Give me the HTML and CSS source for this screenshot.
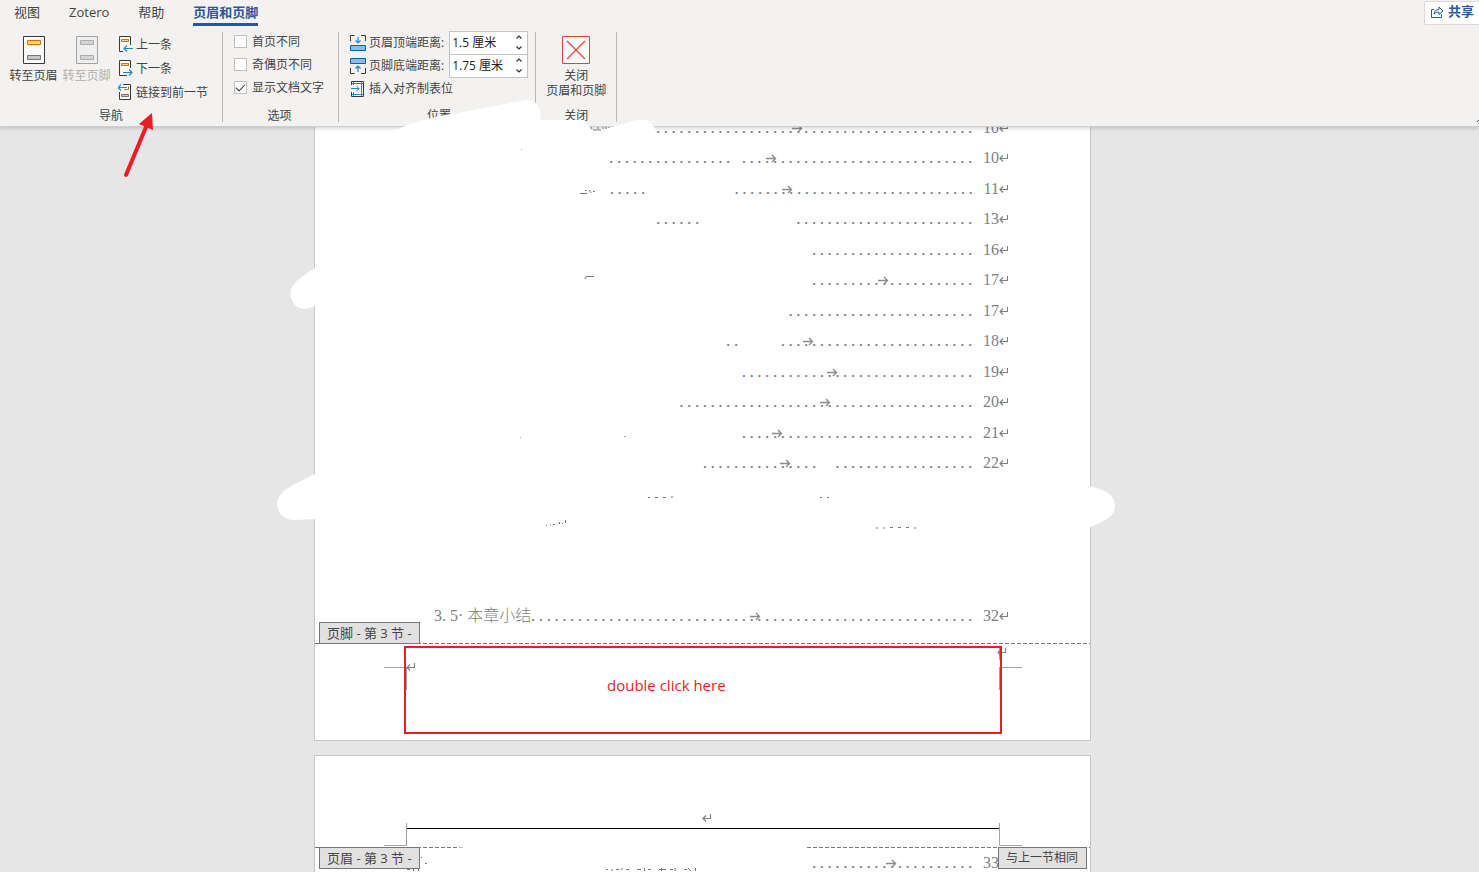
FILE: index.html
```html
<!DOCTYPE html>
<html lang="zh-CN">
<head>
<meta charset="utf-8">
<title>页眉和页脚</title>
<link rel="stylesheet" href="styles.css">
</head>
<body>
<svg class="defs" aria-hidden="true">
  <symbol id="return" viewBox="0 0 9 8"><path d="M8.5 0v4.500H1M4 1.500l-3 3 3 3" fill="none" stroke="#808080" stroke-width="1.200"/></symbol>
  <symbol id="tab" viewBox="0 0 11 9"><path d="M0 4.500h9.500M6 1l3.500 3.500L6 8" fill="none" stroke="#8c8c8c" stroke-width="1.400"/></symbol>
</svg>
<div class="app">
  <header class="ribbon">
    <nav class="tabs">
      <button class="tab">视图</button>
      <button class="tab">Zotero</button>
      <button class="tab">帮助</button>
      <button class="tab tab-active">页眉和页脚</button>
      <button class="share">
        <svg width="13" height="13" viewBox="0 0 13 13" fill="none" stroke="#2b579a"><path d="M3 4.500H.5v8h10V9M3 9c.3-3 2-4.500 5-4.500V2l4 4-4 3.500V7C6 7 4.500 7.500 3 9z"/></svg>
        <span>共享</span>
      </button>
    </nav>
    <div class="groups">
      <section class="group group-nav">
        <div class="group-body">
          <button class="big">
            <svg width="22" height="28" viewBox="0 0 22 28"><path d="M.5.5h21v27H.5z" fill="#fafafa" stroke="#3b3a39"/><path d="M4.500 4.500h13v4h-13z" fill="#fdd68a" stroke="#d86f00"/><path d="M4.500 19.500h13v4h-13z" fill="#c8c6c4" stroke="#797775"/></svg>
            <span>转至页眉</span>
          </button>
          <button class="big" disabled>
            <svg width="22" height="28" viewBox="0 0 22 28"><path d="M.5.5h21v27H.5z" fill="#efefef" stroke="#a3a3a3"/><path d="M4.500 4.500h13v4h-13zM4.500 19.500h13v4h-13z" fill="#d4d4d4" stroke="#acacac"/></svg>
            <span>转至页脚</span>
          </button>
          <div class="stack stack-nav">
            <button class="small">
              <svg width="16" height="16" viewBox="0 0 16 16" fill="none"><path d="M5 15.500H1.500V.5h11V9" fill="#fafafa" stroke="#3b3a39"/><path d="M3.500 3.500h7v2h-7z" fill="#fdd68a" stroke="#d86f00"/><path d="M15 12.500H6M9 9.500l-3 3 3 3" stroke="#1e8bcd" stroke-width="1.2"/></svg>
              <span>上一条</span>
            </button>
            <button class="small">
              <svg width="16" height="16" viewBox="0 0 16 16" fill="none"><path d="M9 15.500H1.500V.5h11V8" fill="#fafafa" stroke="#3b3a39"/><path d="M3.500 3.500h7v2h-7z" fill="#fdd68a" stroke="#d86f00"/><path d="M5 12.500h9M11 9.500l3 3-3 3" stroke="#1e8bcd" stroke-width="1.2"/></svg>
              <span>下一条</span>
            </button>
            <button class="small">
              <svg width="16" height="16" viewBox="0 0 16 16" fill="none"><path d="M5 .5h7.500v15h-11V8" fill="#fafafa" stroke="#3b3a39"/><path d="M6 5.500h4.500v-3" stroke="#d86f00"/><path d="M3.500 10.500h7v2h-7z" fill="#c8c6c4" stroke="#797775"/><path d="M9 3.500H0M3 .5l-3 3 3 3" stroke="#1e8bcd" stroke-width="1.2"/></svg>
              <span>链接到前一节</span>
            </button>
          </div>
        </div>
        <h2>导航</h2>
      </section>
      <section class="group group-options">
        <div class="group-body">
          <div class="stack">
            <label class="check"><input type="checkbox"><span>首页不同</span></label>
            <label class="check"><input type="checkbox"><span>奇偶页不同</span></label>
            <label class="check"><input type="checkbox" checked><span>显示文档文字</span></label>
          </div>
        </div>
        <h2>选项</h2>
      </section>
      <section class="group group-position">
        <div class="group-body">
          <div class="stack">
            <div class="field">
              <svg width="16" height="16" viewBox="0 0 16 16" fill="none"><path d="M.5 6V.5h4M11 .5h4.500V6" stroke="#3b3a39"/><path d="M.5 10.500h15v5H.5z" fill="#83beec" stroke="#0063b1"/><path d="M8 2v6M5.500 5.500L8 8l2.500-2.500" stroke="#1e8bcd" stroke-width="1.2"/></svg>
              <label for="top">页眉顶端距离:</label>
              <div class="spin"><input id="top" type="text" value="1.5 厘米"><div class="arrows"><button aria-label="增大"><svg width="6" height="4" viewBox="0 0 6 4"><path d="M.5 3.500L3 1l2.500 2.500" fill="none" stroke="#333" stroke-width="1.200"/></svg></button><button aria-label="减小"><svg width="6" height="4" viewBox="0 0 6 4"><path d="M.5.5L3 3 5.500.5" fill="none" stroke="#333" stroke-width="1.200"/></svg></button></div></div>
            </div>
            <div class="field">
              <svg width="16" height="16" viewBox="0 0 16 16" fill="none"><path d="M.5 10v5.500h4M11 15.500h4.500V10" stroke="#3b3a39"/><path d="M.5.5h15v5H.5z" fill="#83beec" stroke="#0063b1"/><path d="M8 14V8M5.500 10.500L8 8l2.500 2.500" stroke="#1e8bcd" stroke-width="1.2"/></svg>
              <label for="bottom">页脚底端距离:</label>
              <div class="spin"><input id="bottom" type="text" value="1.75 厘米"><div class="arrows"><button aria-label="增大"><svg width="6" height="4" viewBox="0 0 6 4"><path d="M.5 3.500L3 1l2.500 2.500" fill="none" stroke="#333" stroke-width="1.200"/></svg></button><button aria-label="减小"><svg width="6" height="4" viewBox="0 0 6 4"><path d="M.5.5L3 3 5.500.5" fill="none" stroke="#333" stroke-width="1.200"/></svg></button></div></div>
            </div>
            <button class="field">
              <svg width="16" height="16" viewBox="0 0 16 16" fill="none"><path d="M1.500 4V.5h12v15h-12V11" stroke="#3b3a39" fill="#fafafa"/><path d="M3.500 1v3m0 7v4M11.500 1v14M2 2.500h11M2 13.500h11M1 7.500h8M6.500 5L9 7.500 6.500 10" stroke="#1e8bcd"/></svg>
              <span>插入对齐制表位</span>
            </button>
          </div>
        </div>
        <h2>位置</h2>
      </section>
      <section class="group group-close">
        <div class="group-body">
          <button class="big">
            <svg width="28" height="28" viewBox="0 0 28 28"><path d="M.5.5h27v27H.5z" fill="#fafafa" stroke="#e8403c"/><path d="M5 5l18 18M23 5L5 23" stroke="#e8403c" stroke-width="1.200"/></svg>
            <span>关闭<br>页眉和页脚</span>
          </button>
        </div>
        <h2>关闭</h2>
      </section>
    </div>
  </header>

  <main class="workspace">
    <article class="page page-first">
      <ol class="toc">
        <li><span class="dots">.........................................</span><b>10</b><svg class="ret"><use href="#return"/></svg><svg class="mark" style="left:386px"><use href="#tab"/></svg></li>
        <li><span class="dots">................ ..............................</span><b>10</b><svg class="ret"><use href="#return"/></svg><svg class="mark" style="left:360px"><use href="#tab"/></svg></li>
        <li><span class="dots">.....           ...............................</span><b>11</b><svg class="ret"><use href="#return"/></svg><svg class="mark" style="left:376px"><use href="#tab"/></svg></li>
        <li><span class="dots">......            .......................</span><b>13</b><svg class="ret"><use href="#return"/></svg></li>
        <li><span class="dots">.....................</span><b>16</b><svg class="ret"><use href="#return"/></svg></li>
        <li><span class="dots">.....................</span><b>17</b><svg class="ret"><use href="#return"/></svg><svg class="mark" style="left:472px"><use href="#tab"/></svg></li>
        <li><span class="dots">........................</span><b>17</b><svg class="ret"><use href="#return"/></svg></li>
        <li><span class="dots">..     .........................</span><b>18</b><svg class="ret"><use href="#return"/></svg><svg class="mark" style="left:397px"><use href="#tab"/></svg></li>
        <li><span class="dots">..............................</span><b>19</b><svg class="ret"><use href="#return"/></svg><svg class="mark" style="left:421px"><use href="#tab"/></svg></li>
        <li><span class="dots">......................................</span><b>20</b><svg class="ret"><use href="#return"/></svg><svg class="mark" style="left:414px"><use href="#tab"/></svg></li>
        <li><span class="dots">..............................</span><b>21</b><svg class="ret"><use href="#return"/></svg><svg class="mark" style="left:366px"><use href="#tab"/></svg></li>
        <li><span class="dots">...............  ..................</span><b>22</b><svg class="ret"><use href="#return"/></svg><svg class="mark" style="left:374px"><use href="#tab"/></svg></li>
        <li></li>
        <li></li>
        <li></li>
        <li></li>
        <li><span class="title"><span>3.</span><span>5·</span><span>本章小结</span></span><span class="dots">.........................................................</span><b>32</b><svg class="ret"><use href="#return"/></svg><svg class="mark" style="left:344px"><use href="#tab"/></svg></li>
      </ol>
      <footer class="page-footer">
        <span class="tag tag-footer">页脚 - 第 3 节 -</span>
        <svg class="crop" width="640" height="46" viewBox="0 0 640 46" fill="none" stroke="#a3a3a3"><path d="M0 23.500h22M22.500 23v23M615.500 2v14M615.500 23v23M618 23.500h20"/></svg>
        <svg class="ret ret-left"><use href="#return"/></svg>
        <svg class="ret ret-right"><use href="#return"/></svg>
        <div class="callout">double click here</div>
      </footer>
    </article>

    <article class="page">
      <div class="page-header">
        <svg class="ret"><use href="#return"/></svg>
      </div>
      <div class="header-edge">
        <svg class="crop" width="640" height="24" viewBox="0 0 640 24" fill="none" stroke="#a3a3a3"><path d="M22.500 0v22.500H0M615.500 0v22.500H638"/></svg>
        <span class="tag tag-header">页眉 - 第 3 节 -</span>
        <span class="tag tag-same">与上一节相同</span>
      </div>
      <ol class="toc">
        <li><span class="dots">.....................</span><b>33</b><svg class="ret"><use href="#return"/></svg><svg class="mark" style="left:480px"><use href="#tab"/></svg></li>
      </ol>
    </article>
  </main>

  <svg class="ink" width="1479" height="872" viewBox="0 0 1479 872" fill="none">
    <g fill="#fff">
      <path d="M392 132C412 122 430 117 453 114L510 103C520 101 524 100 528 100C538 101 542 109 540 120H582C588 120 588 125 591 131L604 129L638 120C648 118 655 124 656 134L640 142H440z"/>
      <path d="M317 267C306 273 300 278 295 283C288 290 290 299 295 305C301 311 310 309 317 305z"/>
      <path d="M317 473L295 484C282 491 277 497 277 504C277 514 286 520 294 520L317 519z"/>
      <path d="M1088 485L1102 490C1111 493 1115 499 1115 506C1115 514 1109 518 1102 522L1088 528z"/>
    </g>
    <g stroke="#777">
      <path d="M591 127l1 2M593 130h4M598 127v3h3M603 127v2M606 127v2M609 127v1"/>
      <path d="M580 193.500h7M585 190.500h2M589 190l2 3M593 191.500h2"/>
      <path d="M586 276.500h8M586 277l-1 2"/>
      <path d="M624 436.500h2M520 437.500h1M521 149.500h1" stroke="#aaa"/>
      <path d="M648 497.500h2M655 497.500h3M663 497.500h3M671 497h2M820 497.500h2M827 497.500h2"/>
      <path d="M876 528h2M883 528h2M890 527.500h3M898 527.500h3M906 527.500h3M914 528h2"/>
      <path d="M546 525.500h1M550 525h1M553 524.500h2M559.500 522v2M562 523.500h1M565.500 520v3"/>
      <path d="M421 857.500h1M425 863.500h2M407 869.500h3M413.500 868v3M418.500 868v3"/>
      <path d="M606 869.500h2M611 870h2M616 869.500h3M622 868v2M626 869.500h3M637 869.500h4M644.500 868v3M648 869.500h3M659 869.500h7M661.500 868v3M670 869.500h3M675 868v3M684 869.500h3M688 868l3 3M695.500 868v3"/>
    </g>
    <path d="M1477 122l2-2" stroke="#444"/>
    <path d="M126 175l20-48" stroke="#ed1c24" stroke-width="4" stroke-linecap="round"/>
    <path d="M152 113l1 17-14-6z" fill="#ed1c24"/>
  </svg>
</div>
</body>
</html>
```
FILE: styles.css
```css
* { box-sizing: border-box; }

body {
  margin: 0;
  font-family: "Open Sans", "Noto Sans CJK SC", sans-serif;
  font-size: 12px;
  line-height: 15px;
  color: #444;
}

svg { display: block; flex: none; }

button {
  margin: 0;
  padding: 0;
  border: 0;
  background: none;
  font: inherit;
  color: inherit;
  white-space: nowrap;
}

.defs { position: absolute; width: 0; height: 0; }

.app {
  position: relative;
  display: flex;
  flex-direction: column;
  height: 100vh;
  overflow: hidden;
  background: #e6e6e6;
}

/* Ribbon */
.ribbon {
  position: relative;
  flex: none;
  background: #f3f2f1;
  border-bottom: 1px solid #cfcfcf;
  box-shadow: 0 1px 4px rgba(0, 0, 0, 0.2);
  z-index: 1;
}

.tabs {
  display: flex;
  gap: 29px;
  height: 26px;
  padding-left: 14px;
  font-size: 13px;
}

.tab {
  padding-top: 1px;
  border-bottom: 3px solid transparent;
}

.tab-active {
  color: #2b579a;
  font-weight: 700;
  border-color: #2b579a;
}

.share {
  display: flex;
  align-items: center;
  gap: 4px;
  height: 24px;
  margin: 1px 0 0 auto;
  padding: 0 5px 3px 6px;
  border: 1px solid #dddbd9;
  border-right: 0;
  border-radius: 2px 0 0 2px;
  background: #fff;
  color: #2b579a;
  font-weight: 700;
}

.groups {
  display: flex;
  padding: 6px 0 4px;
}

.group {
  display: flex;
  flex-direction: column;
  height: 90px;
  border-right: 1px solid #b8b6b4;
}

.group-body { display: flex; flex: 1; }

.group h2 {
  margin: 0;
  font-size: 12px;
  font-weight: 400;
  line-height: 13px;
  text-align: center;
}

.group-nav { padding: 0 14px 0 7px; }
.group-nav h2 { padding-left: 7px; }
.group-options { padding: 0 13px 0 11px; }
.group-options .stack { margin-top: -2px; padding-right: 1px; }
.group-position { padding: 0 7px 0 11px; }
.group-position .stack { margin-top: -1px; }
.group-close { padding: 0 10px; }

.big {
  display: flex;
  flex-direction: column;
  align-items: center;
  gap: 4px;
  min-width: 53px;
  padding-top: 4px;
}

.big:disabled { color: #b1afad; }

.stack { display: flex; flex-direction: column; }
.stack-nav { padding-left: 5px; }

.small {
  display: flex;
  align-items: center;
  gap: 2px;
  height: 24px;
}

.check {
  display: flex;
  align-items: center;
  gap: 5px;
  height: 23px;
}

.check input {
  appearance: none;
  display: grid;
  place-items: center;
  width: 13px;
  height: 13px;
  margin: 0;
  border: 1px solid #c2c0be;
  background: #fff;
}

.check input:checked::before {
  content: "";
  width: 8px;
  height: 4px;
  border: solid #333;
  border-width: 0 0 1px 1px;
  transform: translateY(-1px) rotate(-45deg);
}

.field {
  display: flex;
  align-items: center;
  gap: 3px;
  height: 23px;
}

.spin {
  display: flex;
  width: 79px;
  height: 24px;
  margin-left: auto;
  border: 1px solid #c6c4c2;
  background: #fff;
}

.field label { margin-right: 2px; }

.spin input {
  flex: 1;
  min-width: 0;
  padding: 0 0 0 2px;
  border: 0;
  background: none;
  font: inherit;
  color: #222;
}

.arrows {
  display: flex;
  flex-direction: column;
  width: 16px;
}

.arrows button {
  display: grid;
  flex: 1;
  place-items: center;
}

/* Document */
.workspace {
  flex: 1;
  min-height: 0;
  overflow: hidden;
  padding-left: 314px;
}

.page {
  position: relative;
  width: 777px;
  margin-bottom: 14px;
  border: 1px solid #c6c6c6;
  background: #fff;
}

.page-first { margin-top: -15px; }

.toc {
  margin: 0;
  padding: 0 82px 0 91px;
  list-style: none;
  font-family: "Liberation Serif", "Noto Sans CJK SC", serif;
  font-size: 16px;
  color: #7f7f7f;
}

.toc li {
  position: relative;
  display: flex;
  align-items: baseline;
  justify-content: flex-end;
  height: 30px;
  line-height: 30px;
}

.toc li:nth-child(even) { height: 31px; }

.toc b {
  margin-left: 9px;
  font-weight: 400;
}

.title {
  display: flex;
  gap: 4px;
  margin: 0 auto 0 28px;
  font-weight: 300;
  white-space: nowrap;
}

.title + .dots { margin-left: -4px; }

.dots {
  font-family: "Liberation Mono", monospace;
  font-size: 13px;
  font-weight: 700;
  white-space: pre;
}

.ret { width: 9px; height: 8px; }

.toc .ret {
  align-self: flex-start;
  margin-top: 11px;
}

.mark {
  position: absolute;
  top: 11px;
  width: 11px;
  height: 9px;
}

.page-footer, .header-edge {
  position: relative;
  background: repeating-linear-gradient(to right, #777 0 4px, transparent 4px 6px) top / 100% 1px no-repeat;
}

.page-footer {
  margin-top: 12px;
  padding: 3px 88px 6px 89px;
}

.callout {
  height: 88px;
  padding: 27px 0 0 201px;
  border: 2px solid #ed1c24;
  color: #ed1c24;
  font-size: 15px;
  line-height: 20px;
  position: relative;
}

.crop { position: absolute; top: 1px; left: 69px; }

.ret-left, .ret-right { position: absolute; }
.ret-left { left: 91px; top: 20px; }
.ret-right { left: 682px; top: 5px; }

.tag {
  position: absolute;
  padding: 2px 7px;
  border: 1px solid #777;
  background: #e1e1e1;
  font-size: 12px;
  line-height: 16px;
  white-space: nowrap;
  z-index: 1;
}

.tag-footer { left: 4px; bottom: 96px; font-size: 13px; }
.tag-header { left: 4px; top: 0; font-size: 13px; }
.tag-same { right: 3px; top: 0; padding-right: 8px; }

.page-header {
  display: flex;
  justify-content: center;
  margin: 0 90px 18px 91px;
  padding: 58px 0 6px 6px;
  border-bottom: 1px solid #000;
}

.header-edge {
  height: 1px;
  background:
    linear-gradient(to right, transparent 140px, #fff 152px, #fff 492px, transparent 492px) top / 100% 1px no-repeat,
    repeating-linear-gradient(to right, #777 0 4px, transparent 4px 6px) top / 100% 1px no-repeat;
}

.header-edge .crop { top: -24px; }

/* Drawn annotations float over ribbon and document */
.ink {
  position: absolute;
  top: 0;
  left: 0;
  z-index: 2;
  pointer-events: none;
}
```
